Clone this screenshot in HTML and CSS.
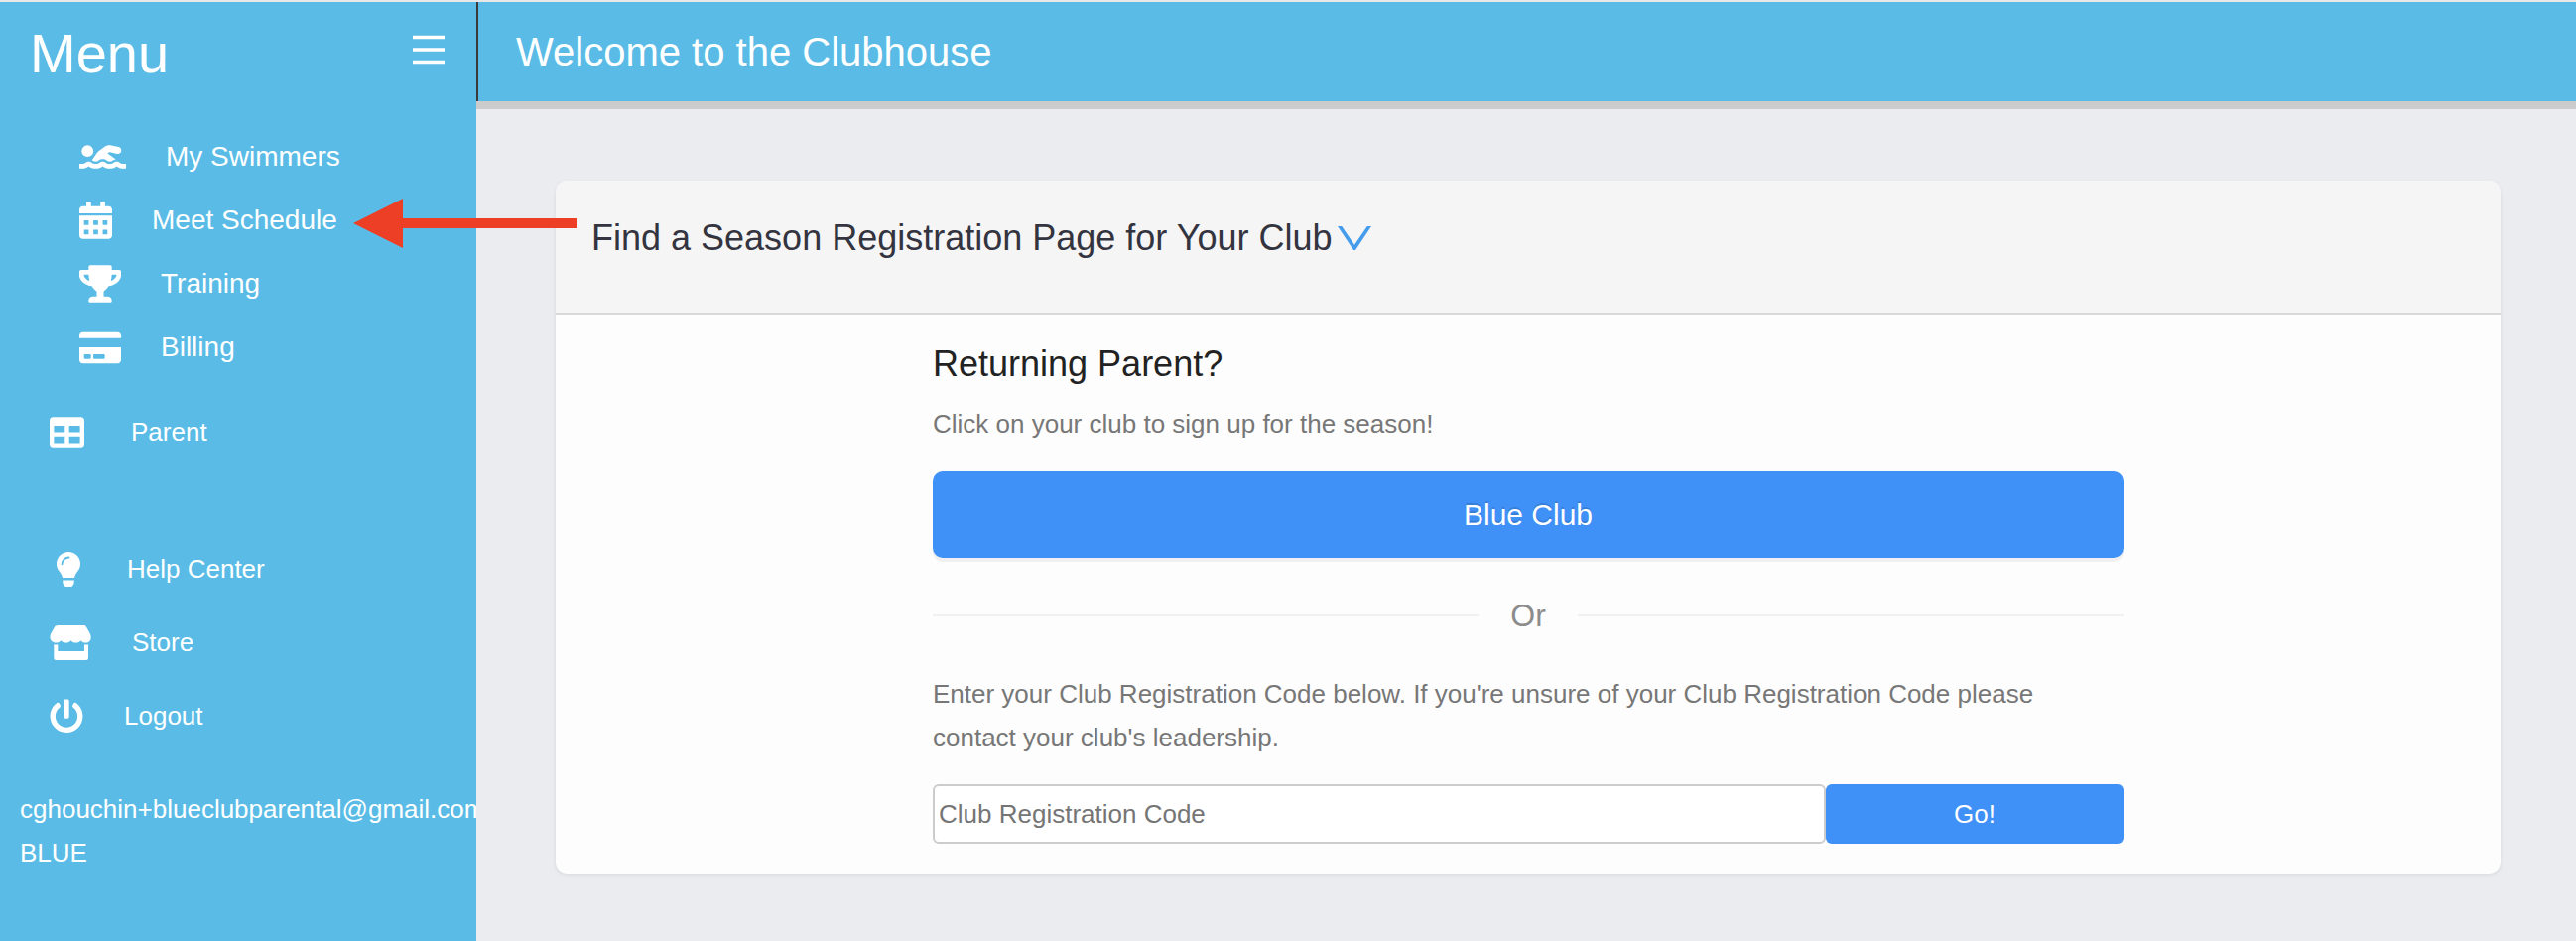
FILE: index.html
```html
<!DOCTYPE html>
<html lang="en">
<head>
<meta charset="utf-8">
<title>Clubhouse</title>
<link rel="stylesheet" href="styles.css">
</head>
<body>
<div class="app">
  <aside class="sidebar">
    <div class="sidebar-head">
      <h2 class="sidebar-title">Menu</h2>
      <button class="menu-toggle" type="button" aria-label="Toggle menu">
        <svg width="32" height="32" viewBox="0 0 32 32" stroke="currentColor" stroke-width="3.400"><path d="M0 3.500H32M0 16H32M0 28.500H32"/></svg>
      </button>
    </div>
    <nav class="nav">
      <ul class="nav-list nav-sub">
        <li><a class="nav-link" href="#">
          <svg width="47" height="38" viewBox="0 0 640 512" fill="currentColor"><circle cx="112" cy="176" r="80"/><path d="M189.610 310.580c3.540 3.260 15.270 9.420 34.390 9.420s30.860-6.160 34.390-9.420c16.020-14.770 34.500-22.580 53.460-22.580h16.300c18.960 0 37.450 7.810 53.460 22.580 3.540 3.260 15.270 9.420 34.390 9.420s30.860-6.160 34.390-9.420c14.860-13.710 31.880-21.120 49.390-22.160l-112.840-80.600 18-12.860c3.640-2.580 8.280-3.520 12.620-2.610l100.350 21.530c25.910 5.530 51.440-10.970 57-36.880 5.550-25.920-10.950-51.440-36.880-57L437.680 98.470c-30.730-6.580-63.020.12-88.560 18.380l-80.020 57.170c-10.380 7.390-19.360 16.440-26.720 26.940L173.750 299c5.470 3.230 10.820 6.930 15.860 11.580zM624 352h-16c-26.040 0-45.800-8.420-56.090-17.900-8.900-8.210-19.660-14.100-31.770-14.100h-16.300c-12.110 0-22.870 5.890-31.770 14.100C461.800 343.580 442.040 352 416 352s-45.800-8.420-56.090-17.900c-8.900-8.210-19.660-14.100-31.770-14.100h-16.300c-12.110 0-22.870 5.890-31.770 14.100C269.800 343.580 250.040 352 224 352s-45.800-8.420-56.090-17.900c-8.900-8.210-19.660-14.100-31.770-14.100h-16.300c-12.110 0-22.870 5.890-31.770 14.100C77.800 343.580 58.040 352 32 352H0v64h32c38.620 0 72.720-12.190 96-31.840 23.280 19.660 57.380 31.840 96 31.840s72.720-12.190 96-31.840c23.280 19.660 57.380 31.840 96 31.840s72.720-12.190 96-31.840c23.280 19.660 57.380 31.840 96 31.840h32v-64z"/></svg>
          <span>My Swimmers</span></a></li>
        <li><a class="nav-link" href="#">
          <svg width="33" height="38" viewBox="0 0 448 512" fill="currentColor" fill-rule="evenodd"><path d="M0 464c0 26.500 21.500 48 48 48h352c26.500 0 48-21.500 48-48V192H0zM64 256h64v64H64zM192 256h64v64h-64zM320 256h64v64h-64zM64 384h64v64H64zM192 384h64v64h-64zM320 384h64v64h-64zM448 160H0v-48c0-26.500 21.500-48 48-48h48V12c0-6.600 5.400-12 12-12h40c6.600 0 12 5.400 12 12v52h128V12c0-6.600 5.400-12 12-12h40c6.600 0 12 5.400 12 12v52h48c26.500 0 48 21.500 48 48z"/></svg>
          <span>Meet Schedule</span></a></li>
        <li><a class="nav-link" href="#">
          <svg width="42" height="38" viewBox="0 0 576 512" fill="currentColor"><path d="M552 64H448V24c0-13.300-10.700-24-24-24H152c-13.300 0-24 10.700-24 24v40H24C10.700 64 0 74.700 0 88v56c0 35.700 22.500 72.400 61.900 100.700 31.500 22.700 69.800 37.100 110 41.700C203.300 338.500 240 360 240 360v72h-48c-35.300 0-64 20.700-64 56v12c0 6.600 5.400 12 12 12h296c6.600 0 12-5.400 12-12v-12c0-35.300-28.700-56-64-56h-48v-72s36.700-21.500 68.100-73.600c40.300-4.600 78.600-19 110-41.700 39.300-28.300 61.900-65 61.900-100.700V88c0-13.300-10.700-24-24-24zM99.300 192.800C74.900 175.200 64 155.600 64 144v-16h64.200c1 32.600 5.800 61.200 12.800 86.200-15.100-5.200-29.200-12.400-41.700-21.400zM512 144c0 16.100-17.700 36.100-35.300 48.800-12.500 9-26.700 16.200-41.800 21.400 7-25 11.800-53.600 12.800-86.200H512z"/></svg>
          <span>Training</span></a></li>
        <li><a class="nav-link" href="#">
          <svg width="42" height="38" viewBox="0 0 576 512" fill="currentColor"><path d="M0 432c0 26.500 21.500 48 48 48h480c26.500 0 48-21.500 48-48V256H0zm192-68c0-6.600 5.400-12 12-12h136c6.600 0 12 5.400 12 12v40c0 6.600-5.400 12-12 12H204c-6.600 0-12-5.400-12-12zm-128 0c0-6.600 5.400-12 12-12h72c6.600 0 12 5.400 12 12v40c0 6.600-5.400 12-12 12H76c-6.600 0-12-5.400-12-12zM576 80v48H0V80c0-26.500 21.500-48 48-48h480c26.500 0 48 21.500 48 48z"/></svg>
          <span>Billing</span></a></li>
      </ul>
      <ul class="nav-list nav-main">
        <li><a class="nav-link" href="#">
          <svg width="41" height="35" viewBox="0 0 600 512" fill="currentColor"><path d="M464 32H48C21.490 32 0 53.490 0 80v352c0 26.510 21.490 48 48 48h416c26.510 0 48-21.490 48-48V80c0-26.510-21.490-48-48-48zM224 416H64v-96h160zm0-160H64v-96h160zm224 160H288v-96h160zm0-160H288v-96h160z"/></svg>
          <span>Parent</span></a></li>
      </ul>
      <ul class="nav-list nav-main nav-secondary">
        <li><a class="nav-link" href="#">
          <svg width="37" height="35" viewBox="-7 0 37 35" fill="currentColor"><path d="M12 0a12 12 0 0 1 12 12c0 3-1.100 5.700-2.900 7.800-1.300 1.500-2.600 3.900-3.100 6.200H6c-.5-2.300-1.800-4.700-3.100-6.200C1.100 17.700 0 15 0 12A12 12 0 0 1 12 0zM6.200 28.500h11.600l-.2 3.300-1.700 2.600-1 .6H9.100l-1-.6-1.700-2.600z"/><path d="M5.500 12.300A7 7 0 0 1 12.500 5.500" fill="none" stroke="#5abce6" stroke-width="1.800" stroke-linecap="round"/></svg>
          <span>Help Center</span></a></li>
        <li><a class="nav-link" href="#">
          <svg width="42" height="35" viewBox="-1 0 42 35" fill="currentColor"><path d="M7 0h27l1.500.8 4.500 8c1.800 4.700-.2 8.700-4.500 8.700-2.200 0-3.900-.9-5-2.300-1.200 1.500-2.900 2.300-5 2.300-2.200 0-3.900-.9-5-2.300-1.200 1.500-2.900 2.300-5 2.300-2.200 0-3.900-.9-5-2.300-1.200 1.500-2.900 2.300-5 2.300-4.700 0-7.300-4-5.500-8.700l4.500-8z"/><path d="M3.300 19.200q2 .5 4 0V26H34v-6.800q2 .5 4 0V33a2 2 0 0 1-2 2H5.300a2 2 0 0 1-2-2z"/></svg>
          <span>Store</span></a></li>
        <li><a class="nav-link" href="#">
          <svg width="34" height="35" viewBox="0 0 512 512" fill="currentColor"><path d="M400 54.100c63 45 104 118.600 104 201.900 0 136.800-110.800 247.700-247.500 248C120 504.300 8.200 393 8 256.400 7.900 173.100 48.900 99.300 111.800 54.200c11.700-8.300 28-4.800 35 7.700L162.600 90c5.900 10.500 3.100 23.800-6.600 31-41.500 30.800-68 79.600-68 134.900-.1 92.300 74.500 168.100 168 168.100 91.600 0 168.600-74.200 168-169.100-.3-51.800-24.700-101.800-68.100-134-9.700-7.200-12.400-20.500-6.500-30.900l15.800-28.100c7-12.400 23.200-16.100 34.800-7.800zM296 264V24c0-13.300-10.700-24-24-24h-32c-13.300 0-24 10.700-24 24v240c0 13.300 10.700 24 24 24h32c13.300 0 24-10.700 24-24z"/></svg>
          <span>Logout</span></a></li>
      </ul>
    </nav>
    <div class="account">
      <div>cghouchin+blueclubparental@gmail.com</div>
      <div>BLUE</div>
    </div>
  </aside>

  <div class="page">
    <header class="topbar"><h1 class="topbar-title">Welcome to the Clubhouse</h1></header>
    <main class="content">
      <section class="card">
        <header class="card-head">
          <h2 class="card-title">Find a Season Registration Page for Your Club</h2>
          <svg class="chevron" width="34" height="24" viewBox="0 0 34 24" fill="#459cec"><path d="M0 0H4.200L17 18.800L29.800 0H34L18 24H16z"/></svg>
        </header>
        <div class="card-body">
          <div class="register">
            <h3 class="register-title">Returning Parent?</h3>
            <p class="hint">Click on your club to sign up for the season!</p>
            <button class="club-button" type="button">Blue Club</button>
            <div class="divider">Or</div>
            <p class="hint"><label for="club-code">Enter your Club Registration Code below. If you're unsure of your Club Registration Code please contact your club's leadership.</label></p>
            <form class="code-form">
              <input class="code-input" id="club-code" type="text" placeholder="Club Registration Code">
              <button class="go-button" type="button">Go!</button>
            </form>
          </div>
        </div>
      </section>
    </main>
  </div>

  <svg class="pointer-arrow" width="225" height="50" viewBox="0 0 225 50" fill="#ec3f25"><path d="M0 25L50 0V20H225V30H50V50z"/></svg>
</div>
</body>
</html>
```
FILE: styles.css
```css
* {
  box-sizing: border-box;
}

body {
  margin: 0;
  font-family: "Liberation Sans", Arial, sans-serif;
  font-size: 26px;
  line-height: 44px;
  color: #777;
  background: #ebecf0;
}

h1, h2, h3, p, ul {
  margin: 0;
  padding: 0;
  font-weight: 400;
}

button, input {
  font: inherit;
}

.app {
  position: relative;
  display: flex;
  min-height: 100vh;
  border-top: 2px solid #e8e8e8;
}

.sidebar {
  flex: 0 0 480px;
  overflow: hidden;
  background: #5abce6;
  color: #fff;
}

.sidebar-head {
  display: flex;
  align-items: flex-start;
  justify-content: space-between;
  height: 100px;
  padding: 20px 32px 0 30px;
}

.sidebar-title {
  font-size: 56px;
  line-height: 64px;
}

.menu-toggle {
  display: flex;
  padding: 12px 0 0;
  border: 0;
  background: none;
  color: inherit;
}

.nav {
  padding-top: 24px;
}

.nav-list {
  list-style: none;
}

.nav-link {
  display: flex;
  align-items: center;
  gap: 40px;
  color: inherit;
  text-decoration: none;
}

.nav-sub {
  padding-left: 80px;
  font-size: 28px;
}

.nav-sub .nav-link {
  height: 64px;
}

.nav-main {
  padding: 16px 0 0 50px;
}

.nav-main .nav-link {
  gap: 41px;
  height: 74px;
}

.nav-secondary {
  padding-top: 64px;
}

.account {
  padding: 35px 0 0 20px;
  white-space: nowrap;
}

.page {
  flex: 1;
  min-width: 0;
}

.topbar {
  display: flex;
  align-items: center;
  height: 108px;
  padding: 0 40px;
  border-bottom: 8px solid #ccc;
  background: linear-gradient(#3a3a3a, #3a3a3a) left / 2px 100% no-repeat #5abce6;
}

.topbar-title {
  font-size: 40px;
  line-height: 48px;
  color: #fff;
}

.content {
  padding: 72px 76px 68px 80px;
}

.card {
  border-radius: 12px;
  overflow: hidden;
  background: #fdfdfd;
  box-shadow: 0 2px 4px rgba(0, 0, 0, 0.08);
}

.card-head {
  display: flex;
  align-items: center;
  gap: 6px;
  padding: 34px 36px 51px;
  border-bottom: 2px solid #d9d9d9;
  background: #f5f5f5;
}

.card-title {
  font-size: 36px;
  line-height: 48px;
  color: #33343f;
}

.card-body {
  padding: 25px 36px 30px;
}

.register {
  max-width: 1200px;
  margin: 0 auto;
}

.register-title {
  margin-bottom: 13px;
  font-size: 36px;
  line-height: 50px;
  color: #222;
}

.club-button {
  display: block;
  width: 100%;
  height: 87px;
  margin: 26px 0 34px;
  border: 0;
  border-radius: 10px;
  background: #3f90f7;
  box-shadow: 0 4px 0 #f0f0f0;
  color: #fff;
  font-size: 30px;
  text-shadow: 0 -2px 0 rgba(0, 0, 0, 0.12);
}

.divider {
  display: flex;
  align-items: center;
  gap: 32px;
  margin-bottom: 33px;
  font-size: 32px;
  line-height: 48px;
  color: #8c8c8c;
}

.divider::before,
.divider::after {
  content: "";
  flex: 1;
  height: 2px;
  background: #f0f0f0;
}

.code-form {
  display: grid;
  grid-template-columns: 3fr 1fr;
  height: 60px;
  margin-top: 25px;
}

.code-input {
  min-width: 0;
  padding: 0 4px;
  border: 2px solid #ccc;
  border-radius: 6px;
  background: #fff;
  color: #333;
}

.code-input::placeholder {
  color: #757575;
  opacity: 1;
}

.go-button {
  padding: 0;
  border: 0;
  border-radius: 6px;
  background: #3f90f7;
  color: #fff;
}

/* Callout pointing at the Meet Schedule entry */
.pointer-arrow {
  position: absolute;
  top: 198px;
  left: 356px;
}
```
